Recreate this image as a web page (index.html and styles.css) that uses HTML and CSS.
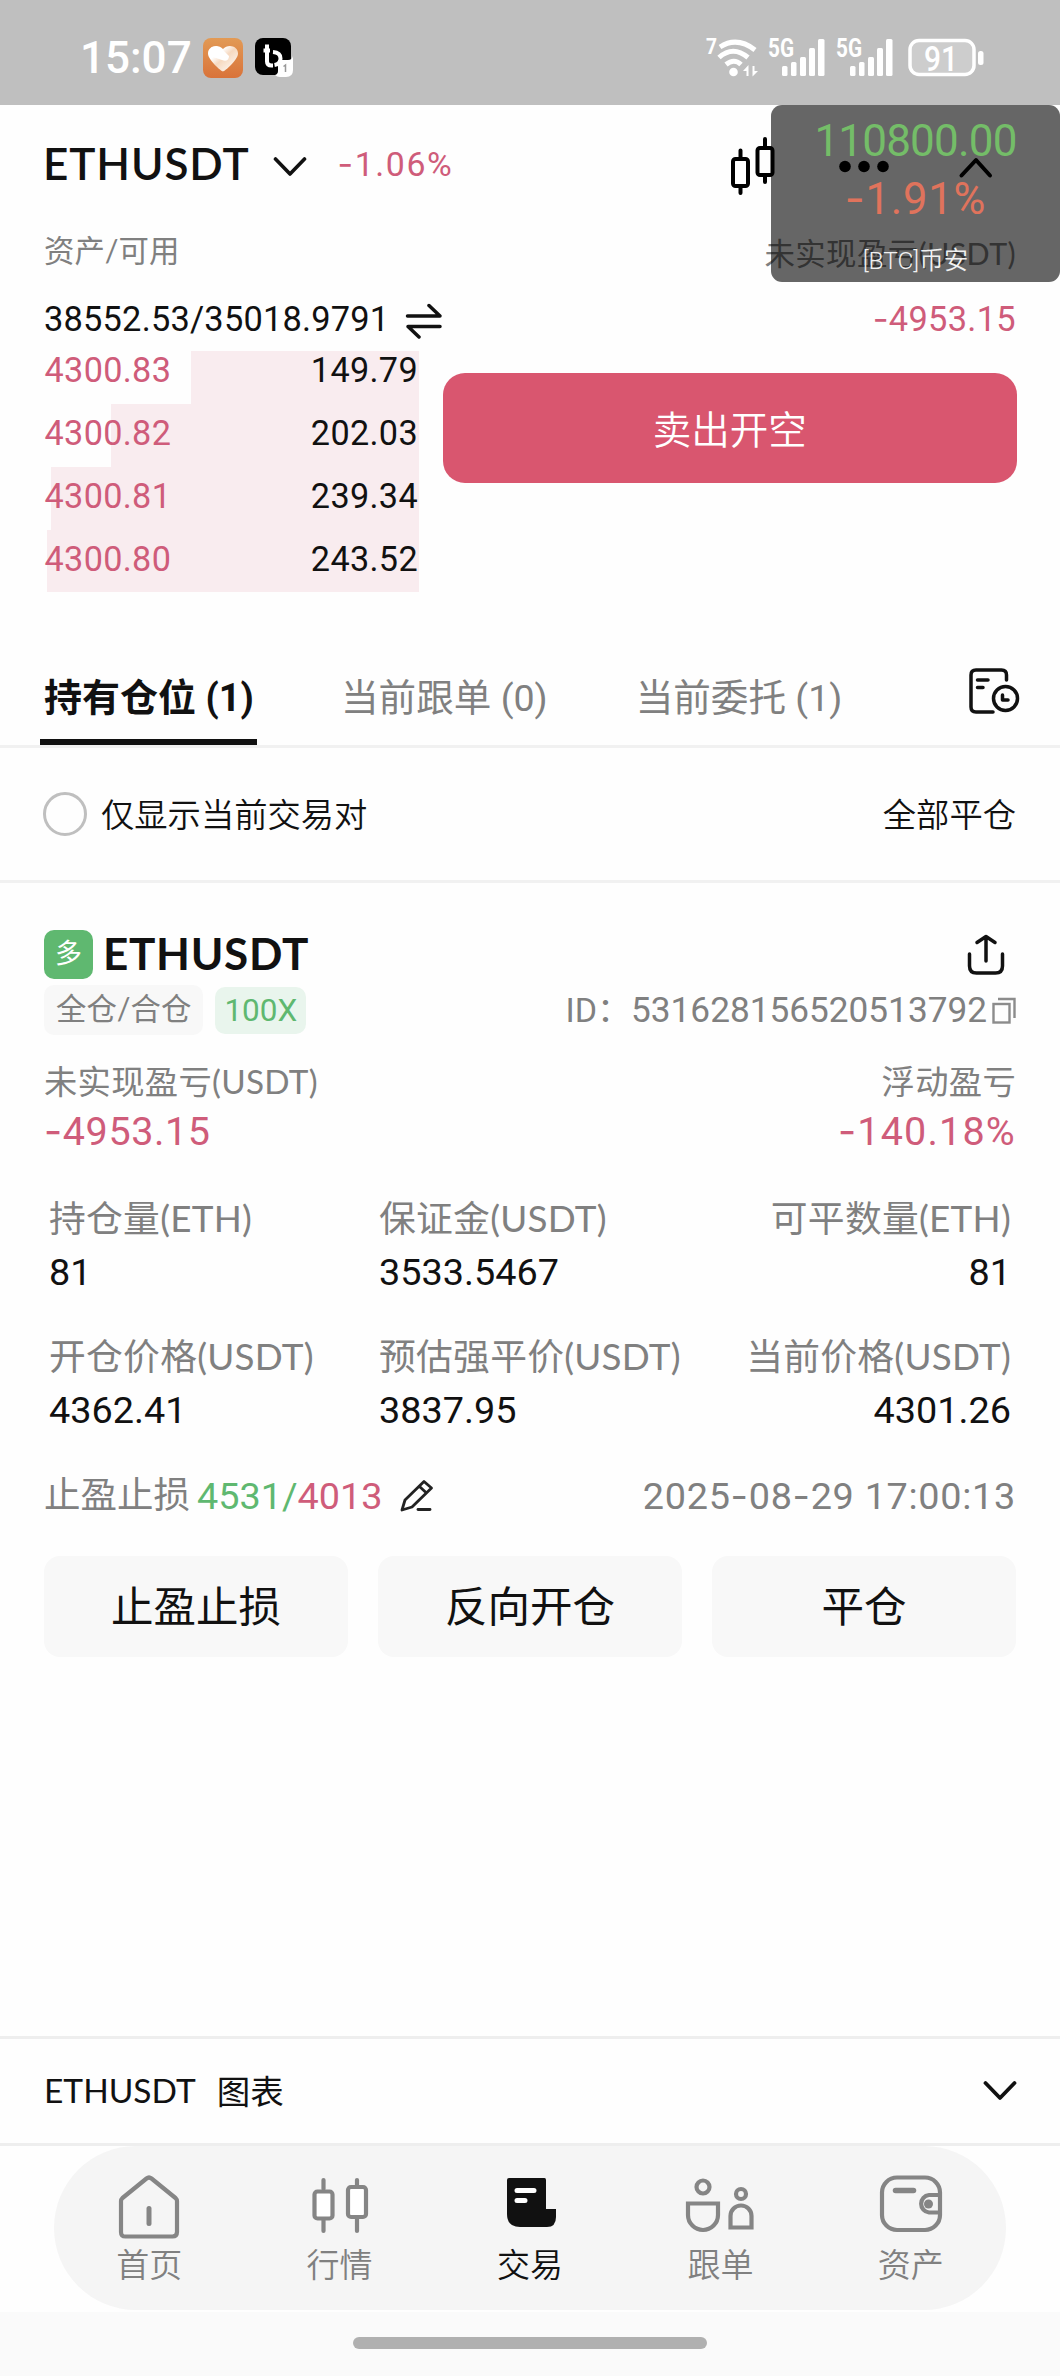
FILE: index.html
```html
<!DOCTYPE html>
<html lang="zh-CN">
<head>
<meta charset="utf-8">
<title>ETHUSDT</title>
<link rel="stylesheet" href="styles.css">
</head>
<body>
<div class="statusbar">
  <span class="clock">15:07</span>
  <svg class="app-heart" width="40" height="40" viewBox="0 0 40 40">
    <defs>
      <linearGradient id="orange" x1="0" y1="0" x2="0" y2="1"><stop offset="0" stop-color="#e29a55"/><stop offset="1" stop-color="#d9733a"/></linearGradient>
      <linearGradient id="heart" x1="0" y1="0" x2="1" y2="1"><stop offset="0.3" stop-color="#fff"/><stop offset="0.5" stop-color="#f6d9c0"/><stop offset="1" stop-color="#fff"/></linearGradient>
    </defs>
    <rect width="40" height="40" rx="8" fill="url(#orange)"/>
    <path d="M20 33.5C18.5 33.5 5 22 5 15.500C5 8 15 5.500 20 11C25 5.500 35 8 35 15.500C35 22 21.500 33.500 20 33.500Z" fill="url(#heart)"/>
    <path d="M8 10C13 7 17 9 20 12L26 18C26 22 23 24 19 22L7 18Z" fill="#fff"/>
  </svg>
  <svg class="app-b" width="39" height="40" viewBox="0 0 39 40">
    <rect width="36" height="37" rx="8" fill="#000"/>
    <path d="M12 6.500V23.500Q12 27.500 16.500 27.500H18M8.500 12.500H15M18 14Q25.500 14.500 25.500 20.500Q25.500 26 19.500 27" fill="none" stroke="#fff" stroke-width="4"/>
    <path d="M23 22H33Q37 22 38 18V32Q38 39 31 39H25Q22 39 20 37Q23 36 23 33Z" fill="#fff"/>
    <path d="M28.500 28.500L30.500 27V34" fill="none" stroke="#999" stroke-width="1.500"/>
  </svg>
  <svg class="signals" width="282" height="64" viewBox="-4 -12 282 64">
    <g fill="#fff" font-family="Roboto, sans-serif" font-weight="700">
      <text x="0" y="16" font-size="22" textLength="11" lengthAdjust="spacingAndGlyphs">7</text>
      <text x="62" y="19" font-size="25" textLength="26" lengthAdjust="spacingAndGlyphs">5G</text>
      <text x="130" y="19" font-size="25" textLength="26" lengthAdjust="spacingAndGlyphs">5G</text>
      <text x="218" y="33" font-size="35" font-weight="500" textLength="34" lengthAdjust="spacingAndGlyphs">91</text>
    </g>
    <g fill="none" stroke="#fff" stroke-width="5">
      <path d="M14 9Q31 -2 49 12"/><path d="M13 19.500Q27 7 42 19.500"/><path d="M20 26.500Q28 20 35 26.500"/>
    </g>
    <circle cx="27.500" cy="34" r="4.300" fill="#fff"/>
    <path d="M37 33L42.500 27V38H40.500V33ZM52 33L46.500 38.500V28H48.500V33Z" fill="#fff"/>
    <g fill="#fff">
      <rect x="76" y="28" width="5.500" height="10" rx="1.500"/><rect x="85" y="24" width="5.500" height="14" rx="1.500"/><rect x="94" y="19" width="6" height="19" rx="1.500"/><rect x="103" y="10" width="6" height="28" rx="1.500"/><rect x="112" y="1" width="6.500" height="37" rx="1.500"/>
      <rect x="144" y="28" width="5.500" height="10" rx="1.500"/><rect x="153" y="24" width="5.500" height="14" rx="1.500"/><rect x="162" y="19" width="6" height="19" rx="1.500"/><rect x="171" y="10" width="6" height="28" rx="1.500"/><rect x="180" y="1" width="6.500" height="37" rx="1.500"/>
    </g>
    <rect x="204" y="2.500" width="64" height="34" rx="9" fill="#fff" fill-opacity="0.22" stroke="#fff" stroke-width="3.500"/>
    <rect x="272" y="13" width="5.500" height="14" rx="2.500" fill="#fff"/>
  </svg>
</div>

<main class="page">
  <header class="pair">
    <span class="pair-name">ETHUSDT</span>
    <svg class="pair-caret" width="34" height="22" viewBox="0 0 34 22"><path d="M2.500 3L17 18L31.500 3" fill="none" stroke="#111" stroke-width="3.600" stroke-linecap="round" stroke-linejoin="round"/></svg>
    <span class="pair-change"><span class="dash">-</span>1.06%</span>
    <svg class="pair-tools" width="264" height="60" viewBox="0 0 264 60" fill="none" stroke="#000" stroke-width="4" stroke-linecap="round">
      <rect x="3" y="23" width="15" height="27" rx="2.500"/><path d="M10.500 14.500V22M10.500 51V57"/>
      <rect x="27.500" y="12" width="15" height="27" rx="2.500"/><path d="M35 3V11M35 40V46"/>
      <g fill="#000" stroke="none"><circle cx="115" cy="30.500" r="5.800"/><circle cx="134" cy="30.500" r="5.800"/><circle cx="153" cy="30.500" r="5.800"/></g>
      <path d="M231.500 39.500L246 24L260 39.500" stroke-linejoin="round"/>
    </svg>
  </header>

  <section class="assets">
    <div class="asset-labels lat"><span class="asset-left">资产/可用</span><span class="asset-right">未实现盈亏(USDT)</span></div>
    <div class="asset-values">
      <span class="asset-total">38552.53/35018.9791</span>
      <svg class="swap" width="38" height="36" viewBox="0 0 38 36" fill="none" stroke="#111" stroke-width="3.500" stroke-linecap="round" stroke-linejoin="round"><path d="M2.500 13H35L24 2.500M35 23.500H3L14 34"/></svg>
      <span class="down push"><span class="dash">-</span>4953.15</span>
    </div>
  </section>

  <section class="trade">
    <div class="book">
      <div class="book-row" style="--depth:228px"><span class="down">4300.83</span><span>149.79</span></div>
      <div class="book-row" style="--depth:308px"><span class="down">4300.82</span><span>202.03</span></div>
      <div class="book-row" style="--depth:368px"><span class="down">4300.81</span><span>239.34</span></div>
      <div class="book-row" style="--depth:372px"><span class="down">4300.80</span><span>243.52</span></div>
    </div>
    <button class="sell">卖出开空</button>
  </section>

  <nav class="tabs">
    <span class="tab active">持有仓位 (1)</span>
    <span class="tab">当前跟单 (0)</span>
    <span class="tab">当前委托 (1)</span>
    <svg class="history" width="52" height="48" viewBox="0 0 52 48" fill="none" stroke="#111" stroke-width="3.500" stroke-linecap="round" stroke-linejoin="round"><path d="M38.500 13V8Q38.500 3 33.500 3H8Q3 3 3 8V40Q3 45 8 45H25M9.500 13H20M9.500 20.500H15"/><circle cx="37.500" cy="31.500" r="12"/><path d="M34.500 28V33H40"/></svg>
  </nav>

  <div class="filter"><span class="radio"></span><span class="filter-text">仅显示当前交易对</span><span class="filter-text push">全部平仓</span></div>

  <section class="position">
    <div class="pos-head">
      <span class="side">多</span><span class="pos-name">ETHUSDT</span>
      <svg class="share" width="38" height="42" viewBox="0 0 38 42" fill="none" stroke="#111" stroke-width="3.500" stroke-linecap="round" stroke-linejoin="round"><path d="M2.500 20V32Q2.500 39 9.500 39H28.500Q35.500 39 35.500 32V20M19 27V3M10 8.500L19 2.500L28 8.500"/></svg>
    </div>
    <div class="pos-meta">
      <span class="tag lat">全仓/合仓</span><span class="tag lever">100X</span>
      <span class="pos-id"><span class="id-key">ID：</span>531628156520513792</span>
      <svg class="copy" width="24" height="27" viewBox="0 0 24 27" fill="none" stroke="#8c8c8c" stroke-width="2.400"><rect x="1.500" y="7" width="16" height="18.500"/><path d="M6 2H22.500V21"/></svg>
    </div>
    <div class="pnl-labels lat"><span>未实现盈亏(USDT)</span><span>浮动盈亏</span></div>
    <div class="pnl-values down"><span><span class="dash">-</span>4953.15</span><span class="pnl-rate"><span class="dash">-</span>140.18%</span></div>

    <dl class="stats">
      <div><dt>持仓量(ETH)</dt><dd>81</dd></div>
      <div><dt>保证金(USDT)</dt><dd>3533.5467</dd></div>
      <div><dt>可平数量(ETH)</dt><dd>81</dd></div>
      <div><dt>开仓价格(USDT)</dt><dd>4362.41</dd></div>
      <div><dt>预估强平价(USDT)</dt><dd>3837.95</dd></div>
      <div><dt>当前价格(USDT)</dt><dd>4301.26</dd></div>
    </dl>

    <div class="tpsl">
      <span class="tpsl-key">止盈止损</span><span class="up">4531/</span><span class="down">4013</span>
      <svg class="pencil" width="34" height="34" viewBox="0 0 34 34" fill="none" stroke="#222" stroke-width="2.800" stroke-linejoin="round"><path d="M2 31L5 21L24 2.500L31.500 9L12 28ZM19.500 7.500L26.500 14" /><path d="M18 30.500H30" stroke-linecap="round"/></svg>
      <span class="opened push">2025<span class="dash">-</span>08<span class="dash">-</span>29 17:00:13</span>
    </div>
    <div class="actions"><button>止盈止损</button><button>反向开仓</button><button>平仓</button></div>
  </section>
</main>

<div class="chartbar lat"><span class="chart-pair">ETHUSDT</span><span class="chart-label">图表</span>
  <svg class="push" width="34" height="22" viewBox="0 0 34 22"><path d="M2.500 3L17 18L31.500 3" fill="none" stroke="#111" stroke-width="3.800" stroke-linecap="round" stroke-linejoin="round"/></svg>
</div>

<div class="dock"><nav class="dock-pill">
  <a class="dock-item"><svg width="64" height="68" viewBox="0 0 64 68" fill="none" stroke="#858585" stroke-width="4.200" stroke-linecap="round" stroke-linejoin="round"><path d="M4 28Q4 26.500 5.500 25L29.500 5.500Q32 3.500 34.500 5.500L58.500 25Q60 26.500 60 28V59Q60 63.500 55.500 63.500H8.500Q4 63.500 4 59Z"/><path d="M32 35.500V50.500" stroke-width="5"/></svg><span>首页</span></a>
  <a class="dock-item"><svg width="64" height="68" viewBox="0 0 64 68" fill="#fff" stroke="#858585" stroke-width="4.200" stroke-linecap="round"><path d="M15.500 7V16M15.500 46V58M49 7V14M49 44V58"/><rect x="6.500" y="18.500" width="18" height="27" rx="3"/><rect x="40" y="14" width="18" height="30" rx="3"/></svg><span>行情</span></a>
  <a class="dock-item current"><svg width="64" height="68" viewBox="0 0 64 68"><path d="M9 7Q9 5 11 5H46.500Q48 5 48 7V36H58V44Q58 54 49 54H22Q9 54 9 41Z" fill="#111"/><path d="M19 17.500H36M19 27.500H27" stroke="#fff" stroke-width="5" stroke-linecap="round"/></svg><span>交易</span></a>
  <a class="dock-item"><svg width="70" height="68" viewBox="0 0 70 68" fill="none" stroke="#858585" stroke-width="4.200"><circle cx="18" cy="14" r="6.500"/><path d="M3 30.500H33V42A15 15 0 0 1 3 42Z"/><circle cx="56" cy="21" r="5"/><path d="M45.500 54.500V43A10.500 10.500 0 0 1 66.500 43V54.500Z"/></svg><span>跟单</span></a>
  <a class="dock-item"><svg width="64" height="68" viewBox="0 0 64 68" fill="none" stroke="#858585" stroke-width="4.200"><rect x="3" y="4.500" width="58" height="52.500" rx="15"/><path d="M61 22H50A8.800 8.800 0 0 0 50 39.500H61"/><circle cx="49.500" cy="31" r="4.500" fill="#858585" stroke="none"/><path d="M16.500 17.500H34.500" stroke-width="5.500" stroke-linecap="round"/></svg><span>资产</span></a>
</nav></div>
<div class="gesture"><span></span></div>

<aside class="ticker">
  <span class="ticker-price">110800.00</span>
  <span class="ticker-change"><span class="dash">-</span>1.91%</span>
  <span class="ticker-name">[BTC]币安</span>
</aside>
</body>
</html>
```
FILE: styles.css
```css
* { box-sizing: border-box; margin: 0; padding: 0; }
body {
  width: 1060px;
  height: 2376px;
  display: flex;
  flex-direction: column;
  position: relative;
  overflow: hidden;
  background: #fefefe;
  color: #111;
  font-family: Roboto, "Noto Sans CJK SC", sans-serif;
  font-weight: 400;
}
svg { display: block; flex: none; }
button { border: 0; font: inherit; color: inherit; }
span { white-space: nowrap; }

.lat { font-family: Lato, "Noto Sans CJK SC", sans-serif; }
.dash { font-family: Inter, Roboto, sans-serif; }
.down { color: #cf5c7a; }
.up { color: #5fb870; }
.push { margin-left: auto; }

/* system status bar */
.statusbar { height: 105px; display: flex; align-items: center; padding: 11px 76px 0 80px; background: #bfbfbf; }
.clock { color: #fff; font-size: 44px; font-weight: 500; line-height: 50px; }
.app-heart { margin-left: 11px; }
.app-b { margin-left: 12px; }
.signals { margin-left: auto; }

.page { flex: 1; }

/* pair header */
.pair { height: 115px; display: flex; align-items: center; padding: 0 66px 0 43px; }
.pair-name { font: 600 44px/50px Lato, sans-serif; letter-spacing: 0.900px; }
.pair-caret { margin: 8px 0 0 23px; }
.pair-change { margin: 2px 0 0 31px; font-size: 33.800px; letter-spacing: 1.600px; color: #cf5c7a; }
.pair-tools { margin: 6px 0 0 auto; }

/* assets */
.asset-labels { height: 66px; display: flex; align-items: center; justify-content: space-between; padding: 0 44px; font-size: 30.400px; color: #808080; }
.asset-left { padding-bottom: 9px; }
.asset-right { padding-bottom: 3px; letter-spacing: 0.400px; }
.asset-values { height: 65px; display: flex; align-items: center; padding: 0 44px; font-size: 34.400px; }
.asset-total { letter-spacing: 0.200px; }
.asset-values .down { letter-spacing: 0.300px; }
.swap { margin: 5px 0 0 16px; }

/* order book and order button */
.trade { height: 299px; display: flex; align-items: flex-start; gap: 24px; padding: 0 43.500px; }
.book { width: 375.500px; height: 241px; overflow: hidden; font-size: 34.200px; }
.book-row { height: 63px; display: flex; align-items: center; justify-content: space-between; padding: 0 1px 6px 1px; letter-spacing: 0.350px; background: linear-gradient(to left, #f9ecef var(--depth), transparent 0); }
.book-row:first-child { margin-top: -10px; background-size: 100% 53px; background-position: bottom; background-repeat: no-repeat; }
.sell { flex: 1; height: 110px; margin-top: 22px; padding-bottom: 3px; border-radius: 22px; background: #d9566f; color: #fff; font-size: 38.500px; font-weight: 350; }

/* tabs */
.tabs { height: 98px; display: flex; padding: 0 40px; border-bottom: 3px solid #f1f1f1; font: 37.600px/97px Roboto, "Noto Sans CJK SC", sans-serif; color: #808080; }
.tab { padding: 0 4px; margin-right: 80px; }
.tab.active { width: 217px; color: #111; font-size: 38px; font-weight: 700; box-shadow: inset 0 -6px #111; }
.history { margin: 17px 0 0 auto; }

.filter { height: 135px; display: flex; align-items: center; padding: 0 44px; border-bottom: 3px solid #f1f1f1; font-size: 33.300px; font-weight: 350; }
.filter-text { padding-bottom: 3px; }
.radio { width: 44px; height: 44px; margin: 0 14px 0 -1px; border: 3.500px solid #bfbfbf; border-radius: 50%; }

/* position card */
.position { padding: 47px 44px 0; }
.pos-head { height: 49px; display: flex; align-items: flex-start; }
.side { width: 49px; height: 49px; border-radius: 10px; background: #5fb870; color: #fff; font-size: 27px; line-height: 49px; text-align: center; }
.pos-name { margin-left: 10px; font: 700 44px/46px Lato, sans-serif; letter-spacing: 0.700px; }
.share { margin: 4px 11px 0 auto; }
.pos-meta { height: 50px; margin-top: 6px; display: flex; align-items: center; color: #808080; }
.tag { height: 50px; padding: 0 12px; border-radius: 10px; background: #f8f8f8; font-size: 30.400px; line-height: 47px; }
.tag.lever { height: 47px; width: 91px; margin-left: 12px; padding: 0; text-align: center; background: #e9f5ed; color: #5fb870; font-size: 31.500px; }
.pos-id { margin-left: auto; font-size: 35.200px; line-height: 48px; }
.id-key { font-size: 34px; }
.copy { margin-left: 5px; }
.pnl-labels { height: 45px; margin-top: 24px; display: flex; justify-content: space-between; font-size: 33.300px; line-height: 45px; letter-spacing: 0.300px; color: #808080; }
.pnl-values { height: 54px; display: flex; justify-content: space-between; font-size: 39.500px; line-height: 54px; letter-spacing: 0.600px; }
.pnl-rate { letter-spacing: 1.200px; }

.stats { margin: 37px 5px 0 5px; display: grid; grid-template-columns: 330px auto auto; row-gap: 29.500px; }
.stats div:nth-child(3n) { text-align: right; }
.stats dt { font: 36.800px/46px Lato, "Noto Sans CJK SC", sans-serif; letter-spacing: 0.250px; color: #808080; white-space: nowrap; }
.stats dd { font-size: 37.800px; line-height: 62px; }

.tpsl { height: 60px; margin-top: 25px; display: flex; align-items: center; font-size: 37.800px; line-height: 60px; color: #808080; }
.tpsl-key { margin-right: 7px; font-size: 36.500px; }
.pencil { margin-left: 17px; }
.opened { letter-spacing: 0.700px; }
.actions { margin-top: 30px; display: grid; grid-template-columns: repeat(3, 1fr); gap: 30px; }
.actions button { height: 101px; padding-bottom: 5px; border-radius: 16px; background: #f8f8f8; font-size: 42.500px; }

/* collapsed chart */
.chartbar { height: 110px; display: flex; align-items: center; padding: 0 43px 0 44px; border-top: 3px solid #eee; border-bottom: 3px solid #eee; font-size: 33.500px; }
.chart-pair { margin-right: 21px; padding-bottom: 2px; }
.chart-label { padding-bottom: 3px; }

/* bottom navigation */
.dock { height: 166px; padding: 0 54px; }
.dock-pill { height: 164px; border-radius: 82px; background: #f5f5f5; display: grid; grid-template-columns: repeat(5, 1fr); }
.dock-item { display: flex; flex-direction: column; align-items: center; padding-top: 27px; color: #808080; font-size: 33px; font-weight: 350; line-height: 50px; }
.dock-item.current { color: #111; }
.gesture { height: 64px; display: flex; justify-content: center; padding-top: 25px; background: #fafafa; }
.gesture span { width: 354px; height: 12px; border-radius: 6px; background: #b0b0b0; }

/* floating price window */
.ticker { position: absolute; top: 105px; right: 0; width: 289px; height: 177px; border-radius: 11px; background: rgba(0, 0, 0, 0.6); display: flex; flex-direction: column; align-items: center; padding-top: 7px; }
.ticker-price { font-size: 44px; line-height: 58px; letter-spacing: -0.800px; color: #74bd68; }
.ticker-change { font-size: 43.500px; line-height: 57px; letter-spacing: 0.800px; color: #e0735c; }
.ticker-name { margin-top: 13px; font: 350 24.500px/40px Roboto, "Noto Sans CJK SC", sans-serif; color: #f0f0f0; }
```
